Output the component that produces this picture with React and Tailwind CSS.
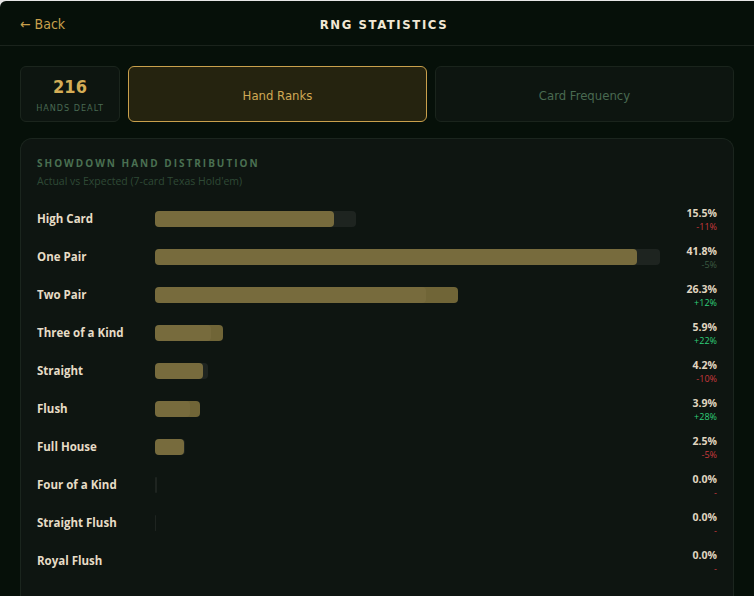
import { useState } from 'react';

const EXPECTED_MAX = 43.8;

const hands = [
  { name: 'High Card', actual: 15.5, expected: 17.4, delta: '-11%', tone: 'bad' },
  { name: 'One Pair', actual: 41.8, expected: 43.8, delta: '-5%', tone: 'muted' },
  { name: 'Two Pair', actual: 26.3, expected: 23.5, delta: '+12%', tone: 'good' },
  { name: 'Three of a Kind', actual: 5.9, expected: 4.83, delta: '+22%', tone: 'good' },
  { name: 'Straight', actual: 4.2, expected: 4.62, delta: '-10%', tone: 'bad' },
  { name: 'Flush', actual: 3.9, expected: 3.03, delta: '+28%', tone: 'good' },
  { name: 'Full House', actual: 2.5, expected: 2.6, delta: '-5%', tone: 'bad' },
  { name: 'Four of a Kind', actual: 0, expected: 0.168, delta: '-', tone: 'bad' },
  { name: 'Straight Flush', actual: 0, expected: 0.0311, delta: '-', tone: 'bad' },
  { name: 'Royal Flush', actual: 0, expected: 0.0032, delta: '-', tone: 'bad' },
];

const toneClass = {
  bad: 'text-[#c9393d]',
  good: 'text-[#2fcf7a]',
  muted: 'text-[#3b5a42]',
};

const sans = "font-['Open_Sans','Noto_Sans',sans-serif]";
const narrow = "font-['Liberation_Sans_Narrow','DejaVu_Sans_Condensed','Roboto',sans-serif]";

function HandRow({ hand }) {
  const expW = (hand.expected / EXPECTED_MAX) * 100;
  const actW = (hand.actual / EXPECTED_MAX) * 100;
  return (
    <div className="flex h-[38px] items-center">
      <div className="w-[118px] shrink-0 text-[11.5px] font-bold text-[#e6dcc6]">{hand.name}</div>
      <div className="relative h-4 flex-1">
        <div className="absolute inset-y-0 left-0 rounded bg-[rgba(255,255,255,0.065)]" style={{ width: `${expW}%` }} />
        <div className="absolute inset-y-0 left-0 rounded bg-[rgba(186,162,84,0.57)]" style={{ width: `${actW}%` }} />
      </div>
      <div className="flex w-[57px] shrink-0 flex-col items-end pt-[2px]">
        <span className="text-[10.5px] font-bold leading-[14px] text-[#e0d6c0]">{hand.actual.toFixed(1)}%</span>
        <span className={`text-[9px] leading-[13px] ${toneClass[hand.tone]}`}>{hand.delta}</span>
      </div>
    </div>
  );
}

export default function App() {
  const [tab, setTab] = useState('ranks');

  return (
    <div className={`min-h-screen bg-[#e6e6e6] pt-px ${sans}`}>
      <div className="min-h-[595px] overflow-hidden rounded-tl-md bg-[#061009]">
        {/* Header */}
        <div className="flex h-[45px] items-center border-b border-[#1a231c] px-5 pt-[3px]">
          <button className={`w-[110px] text-left text-[14px] text-[#c9a04c] ${narrow}`}>← Back</button>
          <h1 className={`flex-1 text-center text-[13px] font-bold tracking-[1.6px] text-[#f1e8d4] ${narrow}`}>
            RNG STATISTICS
          </h1>
          <div className="w-24" />
        </div>

        <div className="px-5 pt-5">
          {/* Stats / tabs */}
          <div className="flex h-14 gap-2">
            <div className="flex w-[100px] flex-col items-center justify-center rounded-md border border-[#1b251d] bg-[#0d1510] pt-1">
              <span className={`text-[18px] font-bold leading-5 text-[#d4ad56] ${narrow}`}>216</span>
              <span className={`mt-[5px] text-[9px] tracking-[1px] text-[#496a52] ${narrow}`}>HANDS DEALT</span>
            </div>
            <button
              onClick={() => setTab('ranks')}
              className={`flex-1 rounded-md border pt-[3px] text-[13px] ${narrow} ${
                tab === 'ranks'
                  ? 'border-[#c9a04c] bg-[#25230f] text-[#d0a955]'
                  : 'border-[#1a241c] bg-[#0d1510] text-[#496a51]'
              }`}
            >
              Hand Ranks
            </button>
            <button
              onClick={() => setTab('freq')}
              className={`flex-1 rounded-md border pt-[3px] text-[13px] ${narrow} ${
                tab === 'freq'
                  ? 'border-[#c9a04c] bg-[#25230f] text-[#d0a955]'
                  : 'border-[#1a241c] bg-[#0d1510] text-[#496a51]'
              }`}
            >
              Card Frequency
            </button>
          </div>

          {/* Distribution card */}
          <div className="mt-4 rounded-t-xl border border-b-0 border-[#1b251e] bg-[#0e1511] px-4 pb-4 pt-[17px]">
            <h2 className="text-[10px] font-bold tracking-[2px] text-[#4a7052]">SHOWDOWN HAND DISTRIBUTION</h2>
            <p className="mt-[3px] text-[10.5px] text-[#2f4a36]">Actual vs Expected (7-card Texas Hold'em)</p>
            <div className="mt-[10px]">
              {hands.map((h) => (
                <HandRow key={h.name} hand={h} />
              ))}
            </div>
          </div>
        </div>
      </div>
    </div>
  );
}
